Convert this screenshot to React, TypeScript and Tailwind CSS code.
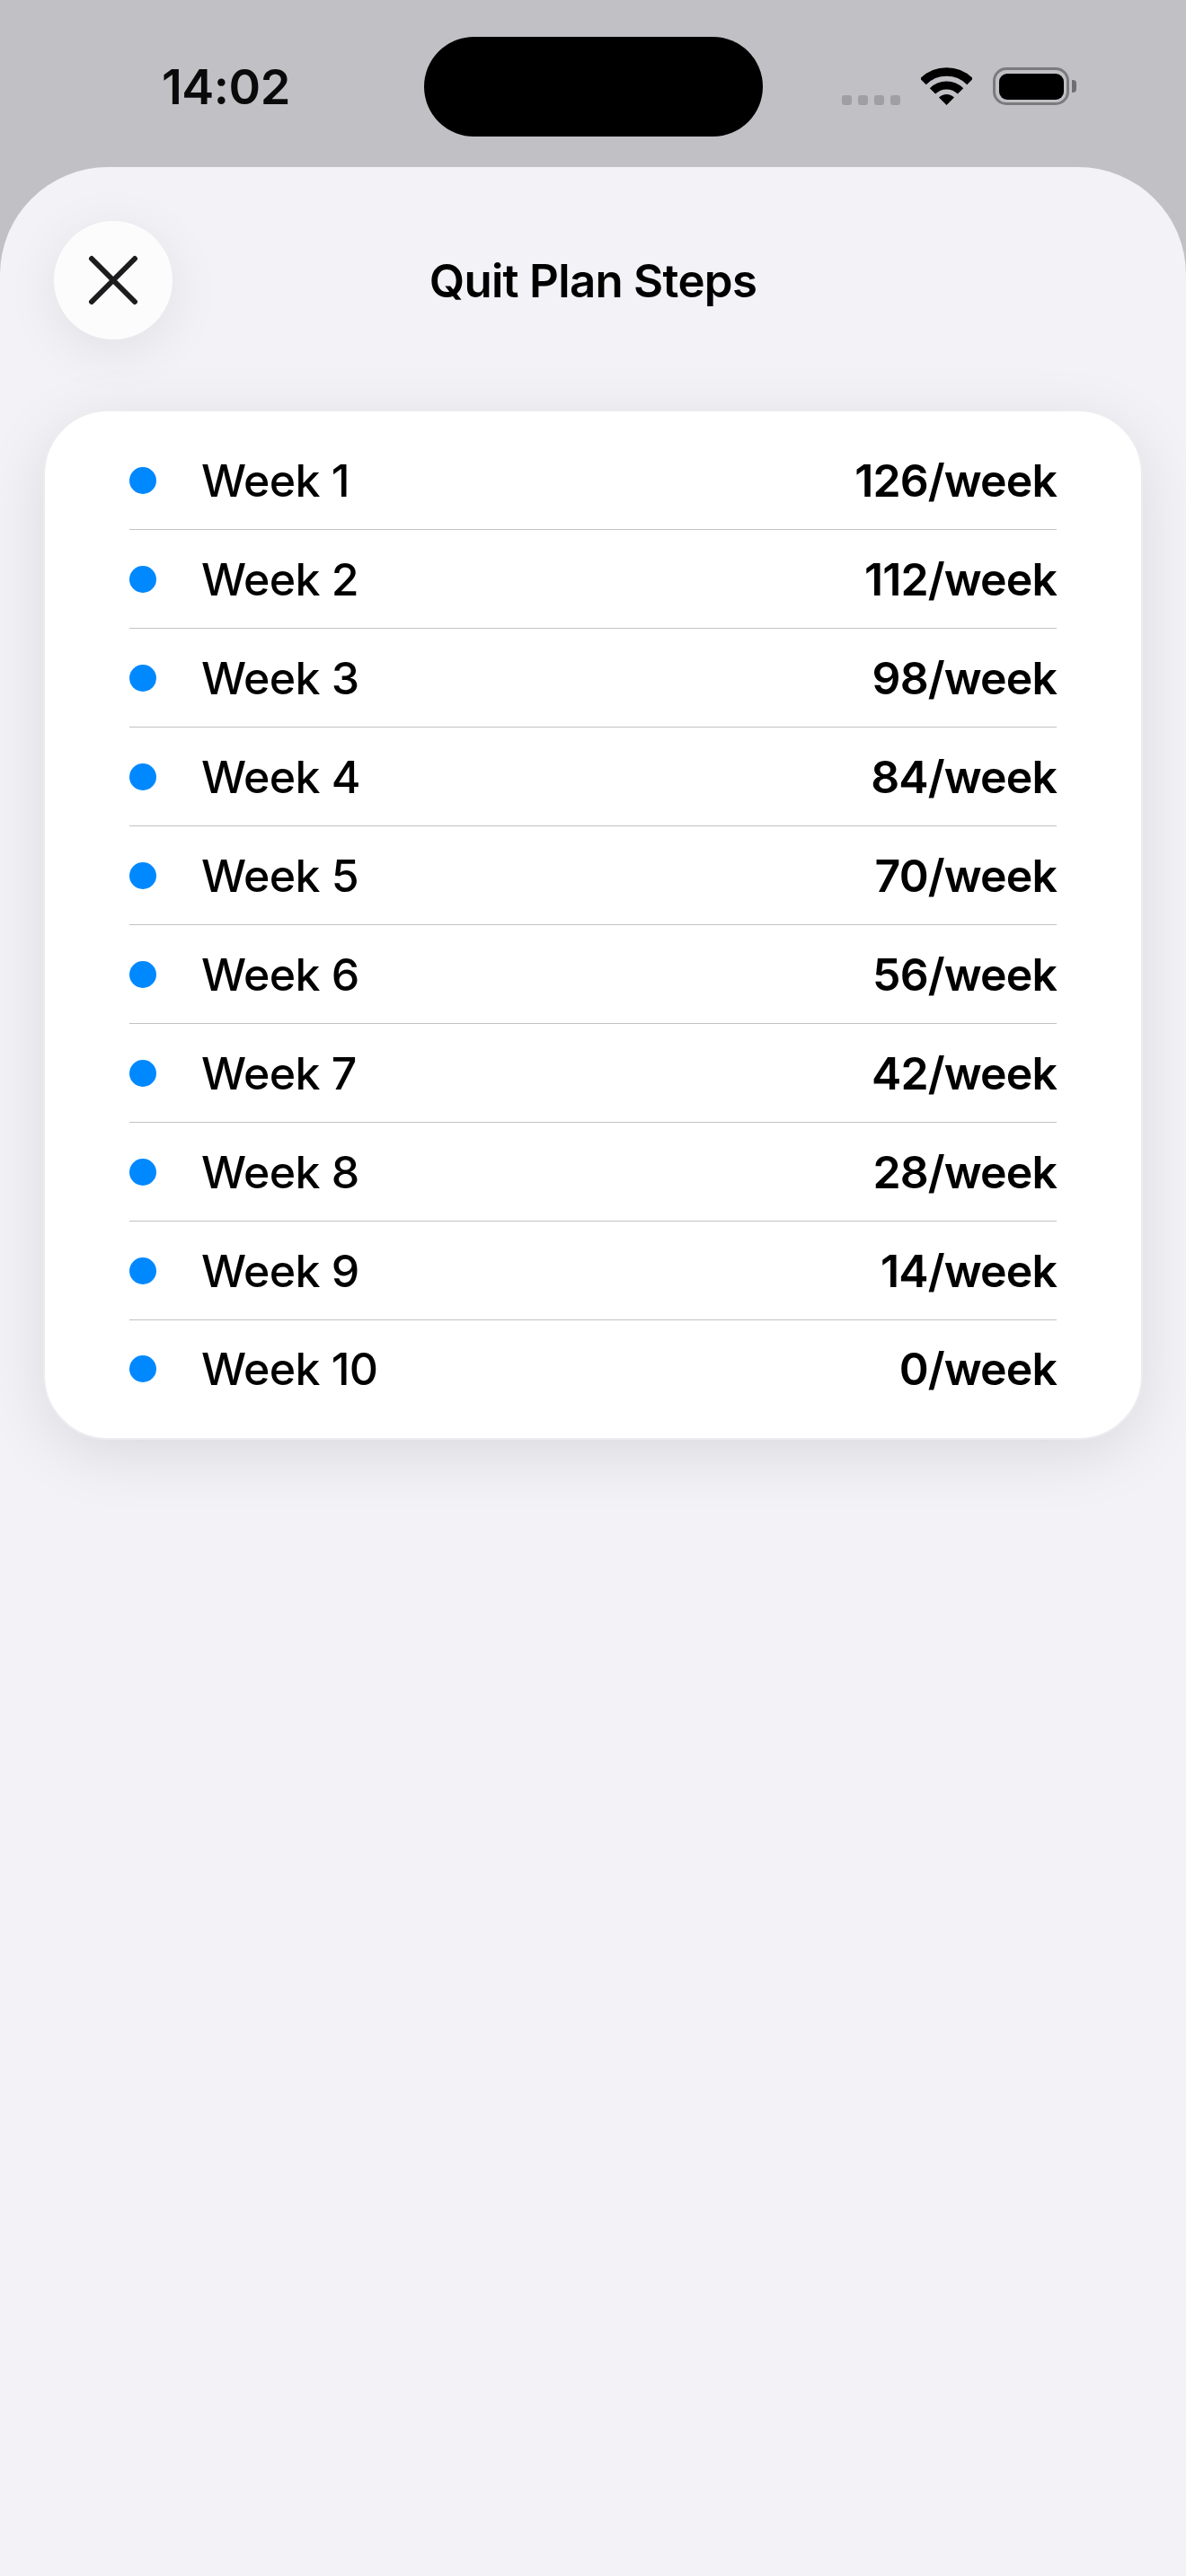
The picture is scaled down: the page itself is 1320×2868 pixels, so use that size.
const steps = [
  { week: "Week 1", rate: "126/week" },
  { week: "Week 2", rate: "112/week" },
  { week: "Week 3", rate: "98/week" },
  { week: "Week 4", rate: "84/week" },
  { week: "Week 5", rate: "70/week" },
  { week: "Week 6", rate: "56/week" },
  { week: "Week 7", rate: "42/week" },
  { week: "Week 8", rate: "28/week" },
  { week: "Week 9", rate: "14/week" },
  { week: "Week 10", rate: "0/week" },
];

function WifiIcon() {
  return (
    <svg width="57" height="42" viewBox="0 0 57 42" fill="none">
      <path d="M2.34 15.84 A37 37 0 0 1 54.66 15.84" stroke="#000" strokeWidth="9.5" />
      <path d="M12.94 26.44 A22 22 0 0 1 44.06 26.44" stroke="#000" strokeWidth="9" />
      <path d="M28.5 42 L20 33.5 A12 12 0 0 1 37 33.5 Z" fill="#000" />
    </svg>
  );
}

function CloseIcon() {
  return (
    <svg width="56" height="56" viewBox="0 0 56 56" fill="none">
      <path d="M4 4 L52 52 M52 4 L4 52" stroke="#1c1c1e" strokeWidth="6" strokeLinecap="round" />
    </svg>
  );
}

function StatusBar() {
  return (
    <div className="flex h-[186px] bg-[#c1c0c5]">
      {/* Time */}
      <div className="w-[472px] pl-[180px] pt-[67px] text-[54px] leading-[60px] font-semibold tracking-[-0.5px] text-[#0a0a0a]">
        14:02
      </div>

      {/* Dynamic island */}
      <div className="mt-[41px] h-[111px] w-[377px] rounded-[56px] bg-black" />

      {/* Signal, wifi, battery */}
      <div className="flex items-end pl-[88px] pt-[75px] h-[117px]">
        <div className="flex gap-[7px] mr-[23px]">
          {[0, 1, 2, 3].map((i) => (
            <div key={i} className="h-[11px] w-[11px] rounded-[3px] bg-[#a0a0a2]" />
          ))}
        </div>
        <WifiIcon />
        <div className="ml-[23px] flex items-center">
          <div className="h-[42px] w-[85px] rounded-[15px] border-[3.5px] border-[#7b7b7d] p-[3.5px]">
            <div className="h-full w-full rounded-[9px] bg-black" />
          </div>
          <div className="ml-[3px] h-[14px] w-[5px] rounded-r-[4px] bg-[#6f6f71]" />
        </div>
      </div>
    </div>
  );
}

export default function App() {
  return (
    <div className="h-[2868px] w-[1320px] overflow-hidden bg-[#c1c0c5] font-['Inter',sans-serif] text-black">
      <StatusBar />

      <div className="h-[2682px] rounded-t-[120px] bg-[#f2f2f7] pt-[60px]">
        {/* Header */}
        <div className="grid grid-cols-[132px_1fr_132px] items-center px-[60px]">
          <button className="flex h-[132px] w-[132px] items-center justify-center rounded-full bg-[#fcfcfd] shadow-[0_12px_60px_rgba(0,0,0,0.08)]">
            <CloseIcon />
          </button>
          <h1 className="pt-[2px] text-center text-[51px] leading-[60px] font-semibold tracking-[-0.7px]">Quit Plan Steps</h1>
          <div />
        </div>

        {/* Steps card */}
        <div className="mx-[48px] mt-[78px] rounded-[72px] border-2 border-[#ececf0] bg-white px-[94px] pt-[22px] pb-[23px] shadow-[0_16px_70px_rgba(0,0,0,0.1)]">
          {steps.map((step, idx) => (
            <div
              key={step.week}
              className={`flex items-center justify-between ${
                idx < steps.length - 1 ? "h-[110px] border-b-[1.5px] border-[#c2c2c4]" : "h-[108px]"
              }`}
            >
              <div className="flex items-center gap-[50px]">
                <div className="h-[30px] w-[30px] rounded-full bg-[#0088ff]" />
                <span className="text-[50px] leading-[60px] font-[450] tracking-[-0.6px]">{step.week}</span>
              </div>
              <span className="text-[50px] leading-[60px] font-semibold tracking-[-0.9px]">{step.rate}</span>
            </div>
          ))}
        </div>
      </div>
    </div>
  );
}
